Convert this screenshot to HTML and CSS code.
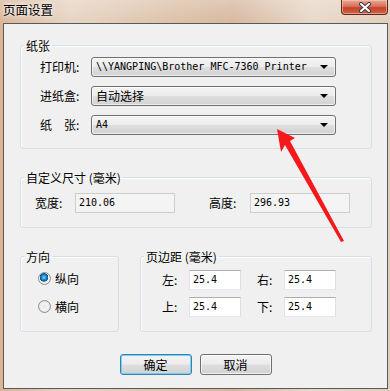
FILE: index.html
```html
<!DOCTYPE html>
<html lang="zh-CN">
<head>
    <meta charset="UTF-8">
    <meta name="viewport" content="width=device-width, initial-scale=1.0">
    <link rel="stylesheet" href="styles.css">
</head>
<body>
    <div class="window">
        <div class="titlebar">
            <span class="title">页面设置</span>
            <button class="close" aria-label="关闭">
                <svg width="14" height="11" viewBox="0 0 14 11">
                    <path d="M3 2 L11 9 M11 2 L3 9" stroke="#3a3f4a" stroke-width="4" stroke-linecap="round"/>
                    <path d="M3 2 L11 9 M11 2 L3 9" stroke="#fff" stroke-width="2" stroke-linecap="round"/>
                </svg>
            </button>
        </div>

        <div class="client">
            <fieldset class="group">
                <legend>纸张</legend>
                <div class="group-body paper">
                    <div class="row">
                        <span class="label">打印机:</span>
                        <div class="combo mono">\\YANGPING\Brother MFC-7360 Printer<i class="caret"></i></div>
                    </div>
                    <div class="row">
                        <span class="label">进纸盒:</span>
                        <div class="combo">自动选择<i class="caret"></i></div>
                    </div>
                    <div class="row">
                        <span class="label">纸　张:</span>
                        <div class="combo mono">A4<i class="caret"></i></div>
                    </div>
                </div>
            </fieldset>

            <fieldset class="group custom">
                <legend>自定义尺寸 (毫米)</legend>
                <div class="group-body size">
                    <span class="label">宽度:</span>
                    <div class="field disabled mono">210.06</div>
                    <span class="label label-h">高度:</span>
                    <div class="field disabled mono">296.93</div>
                </div>
            </fieldset>

            <div class="split">
                <fieldset class="group orient">
                    <legend>方向</legend>
                    <div class="group-body radios">
                        <label class="radio-row"><span class="radio checked"></span>纵向</label>
                        <label class="radio-row"><span class="radio"></span>横向</label>
                    </div>
                </fieldset>

                <fieldset class="group margins">
                    <legend>页边距 (毫米)</legend>
                    <div class="group-body margin-grid">
                        <span class="label">左:</span>
                        <div class="field mono">25.4</div>
                        <span class="label">右:</span>
                        <div class="field mono">25.4</div>
                        <span class="label">上:</span>
                        <div class="field mono">25.4</div>
                        <span class="label">下:</span>
                        <div class="field mono">25.4</div>
                    </div>
                </fieldset>
            </div>

            <div class="actions">
                <button class="btn default">确定</button>
                <button class="btn">取消</button>
            </div>
        </div>

        <!-- annotation drawn over the dialog -->
        <svg class="arrow" width="390" height="391" viewBox="0 0 390 391">
            <polygon points="277,129 295,138 290,141 344,241 341,242 285,145 281,152" fill="#f5191b"/>
        </svg>
    </div>
</body>
</html>
```

FILE: styles.css
```css
:root {
    --face: #f0f0f0;
    --group-line: #d5dfe5;
    --cjk: "Noto Sans CJK SC", "Noto Sans", sans-serif;
    --mono: "DejaVu Sans Mono", "Liberation Mono", "Noto Sans CJK SC", monospace;
}

* {
    margin: 0;
    padding: 0;
    box-sizing: border-box;
}

body {
    font-family: var(--cjk);
    font-size: 12px;
    color: #000;
    background: #dcc4ae;
}

.window {
    position: relative;
    width: 390px;
    height: 391px;
    background:
        linear-gradient(to bottom, rgba(255, 255, 255, 0.25), rgba(255, 255, 255, 0) 24px),
        linear-gradient(to right, #d9b596 0%, #e6d4c3 18%, #dcc0a7 45%, #d6b79d 60%, #e7d8c9 80%, #e1cdba 100%);
    overflow: hidden;
}

.titlebar {
    height: 23px;
    display: flex;
    justify-content: space-between;
    align-items: flex-start;
    padding-left: 3px;
    padding-right: 2px;
}

.title {
    font-size: 12.5px;
    line-height: 20px;
    color: #000;
    text-shadow: 0 0 6px rgba(255, 255, 255, 0.9), 0 0 3px rgba(255, 255, 255, 0.9);
}

.close {
    width: 47px;
    height: 15px;
    border: 1px solid #5b2b22;
    border-top: 0;
    border-radius: 0 0 4px 4px;
    background: linear-gradient(to bottom, #e9a896 0%, #d9715b 45%, #c4432c 55%, #d26043 100%);
    box-shadow: inset 0 0 0 1px rgba(255, 220, 200, 0.5);
    display: flex;
    align-items: center;
    justify-content: center;
}

.close svg {
    display: block;
}

.client {
    height: 366px;
    margin: 0 2px 0 3px;
    border: 1px solid #595959;
    background: var(--face);
    padding: 14px 15px 0 16px;
}

.group {
    border: 1px solid var(--group-line);
    border-radius: 3px;
    box-shadow: inset 1px 1px 0 #fff;
    min-width: 0;
}

.group legend {
    margin-left: 3px;
    padding: 0 2px;
    line-height: 15px;
}

.group-body {
    padding-left: 19px;
}

.label {
    line-height: 20px;
    white-space: nowrap;
}

.mono {
    font-family: var(--mono);
    font-size: 10px;
}

/* paper */

.paper {
    display: flex;
    flex-direction: column;
    gap: 9px;
    padding-top: 4px;
    padding-bottom: 13px;
}

.row {
    display: flex;
    align-items: center;
}

.paper .label {
    width: 51px;
}

.combo {
    position: relative;
    width: 245px;
    height: 20px;
    line-height: 18px;
    padding-left: 4px;
    border: 1px solid #707070;
    border-radius: 3px;
    background: linear-gradient(to bottom, #f4f4f4 0%, #ececec 48%, #dedede 52%, #d2d2d2 100%);
    box-shadow: inset 0 0 0 1px rgba(255, 255, 255, 0.6);
}

.caret {
    position: absolute;
    right: 7px;
    top: 7px;
    border-left: 4px solid transparent;
    border-right: 4px solid transparent;
    border-top: 4px solid #000;
}

/* custom size */

.custom {
    margin-top: 21px;
}

.size {
    display: flex;
    align-items: center;
    padding: 8px 0 14px 14px;
}

.size .label {
    width: 40px;
}

.size .label-h {
    width: 41px;
    margin-left: 34px;
}

.field {
    width: 100px;
    height: 20px;
    line-height: 18px;
    padding-left: 3px;
    border: 1px solid #abadb3;
    border-color: #abadb3 #dbdfe6 #e3e9ef #e2e3ea;
    background: #fff;
}

.field.disabled {
    background: #f4f4f4;
    border-color: #cdcdcd;
}

/* orientation + margins */

.split {
    display: flex;
    gap: 21px;
    margin-top: 21px;
}

.orient {
    width: 99px;
}

.margins {
    flex: 1;
}

.radios {
    display: flex;
    flex-direction: column;
    gap: 8px;
    padding: 4px 0 15px 17px;
}

.radio-row {
    display: flex;
    align-items: center;
    gap: 4px;
    height: 20px;
}

.radio {
    width: 13px;
    height: 13px;
    border-radius: 50%;
    border: 1px solid #8e8f8f;
    background: radial-gradient(circle at 50% 50%, #e6e6e6 0, #f4f4f4 40%, #d4d4d4 100%);
}

.radio.checked {
    background: radial-gradient(circle at 45% 40%, #7fd1ff 0, #1a87c9 2.5px, #0b4f86 4px, #f4f4f4 4.5px, #dcdcdc 100%);
}

.margin-grid {
    display: grid;
    grid-template-columns: 27px 68px 27px 52px;
    row-gap: 7px;
    align-items: center;
    padding: 6px 0 14px 21px;
}

.margin-grid .field {
    width: 52px;
}

/* buttons */

.actions {
    display: flex;
    justify-content: center;
    gap: 8px;
    margin-top: 22px;
    padding-right: 1px;
}

.btn {
    width: 72px;
    height: 21px;
    font-family: var(--cjk);
    font-size: 12px;
    line-height: 19px;
    color: #000;
    border: 1px solid #707070;
    border-radius: 3px;
    background: linear-gradient(to bottom, #f4f4f4 0%, #ececec 48%, #dedede 52%, #d2d2d2 100%);
    box-shadow: inset 0 0 0 1px rgba(255, 255, 255, 0.7);
}

.btn.default {
    border-color: #3c7fb1;
    box-shadow: inset 0 0 0 1px #6fd0f5;
}

.arrow {
    position: absolute;
    left: 0;
    top: 0;
    pointer-events: none;
}
```
